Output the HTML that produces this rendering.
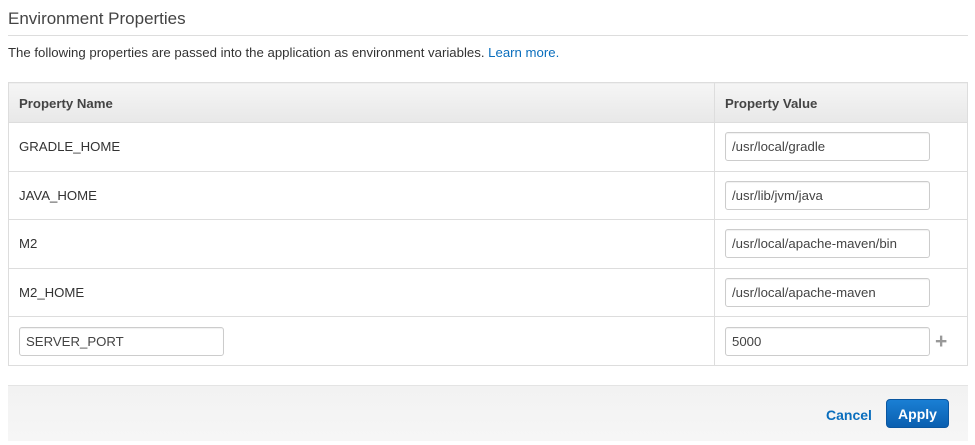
<!DOCTYPE html>
<html><head><meta charset="utf-8"><style>
*{box-sizing:border-box}
body{margin:0;width:975px;height:445px;background:#fff;font-family:"Liberation Sans",Arial,sans-serif;position:relative;overflow:hidden;color:#333}
.h{position:absolute;left:8px;top:9px;font-size:17px;color:#444}
.hr{position:absolute;left:8px;top:35px;width:960px;height:1px;background:#ddd}
.p{position:absolute;left:8px;top:45px;font-size:13.2px;color:#333}
.p a{color:#0a6ebd;text-decoration:none}
table{position:absolute;left:8px;top:82px;width:960px;border-collapse:collapse;font-size:13.2px}
td,th{border:1px solid #ddd;padding:0 10px;text-align:left}
th{background:linear-gradient(#f5f5f5,#e8e8e8);height:40px;font-weight:bold;color:#444;padding-top:1px}
td{height:48.6px}
td.v{width:253px}
.in{display:inline-block;width:205px;height:29px;border:1px solid #ccc;border-radius:3px;padding:6px 6px;font-size:13.2px;color:#444;vertical-align:middle;box-shadow:inset 0 1px 1px rgba(0,0,0,.06)}
.plus{position:absolute;left:935px;top:330px;color:#999;font-size:21px;font-weight:bold}
.ft{position:absolute;left:8px;top:385px;width:960px;height:56px;background:linear-gradient(#f2f2f2,#f6f6f6);border-top:1px solid #e4e4e4}
.cancel{position:absolute;left:826px;top:407px;font-size:14px;font-weight:bold;color:#0a6ebd}
.apply{position:absolute;left:886px;top:399px;width:63px;height:29px;background:linear-gradient(#1a7fd4,#0a5fb0);border:1px solid #0a56a0;border-radius:4px;color:#fff;font-weight:bold;font-size:14px;text-align:center;line-height:29px}
</style></head><body>
<div class="h">Environment Properties</div>
<div class="hr"></div>
<div class="p">The following properties are passed into the application as environment variables. <a>Learn more.</a></div>
<table>
<tr><th>Property Name</th><th class="v">Property Value</th></tr>
<tr><td>GRADLE_HOME</td><td class="v"><span class="in">/usr/local/gradle</span></td></tr>
<tr><td>JAVA_HOME</td><td class="v"><span class="in">/usr/lib/jvm/java</span></td></tr>
<tr><td>M2</td><td class="v"><span class="in">/usr/local/apache-maven/bin</span></td></tr>
<tr><td>M2_HOME</td><td class="v"><span class="in">/usr/local/apache-maven</span></td></tr>
<tr><td><span class="in">SERVER_PORT</span></td><td class="v"><span class="in">5000</span></td></tr>
</table>
<div class="plus">+</div>
<div class="ft"></div>
<div class="cancel">Cancel</div>
<div class="apply">Apply</div>
</body></html>
